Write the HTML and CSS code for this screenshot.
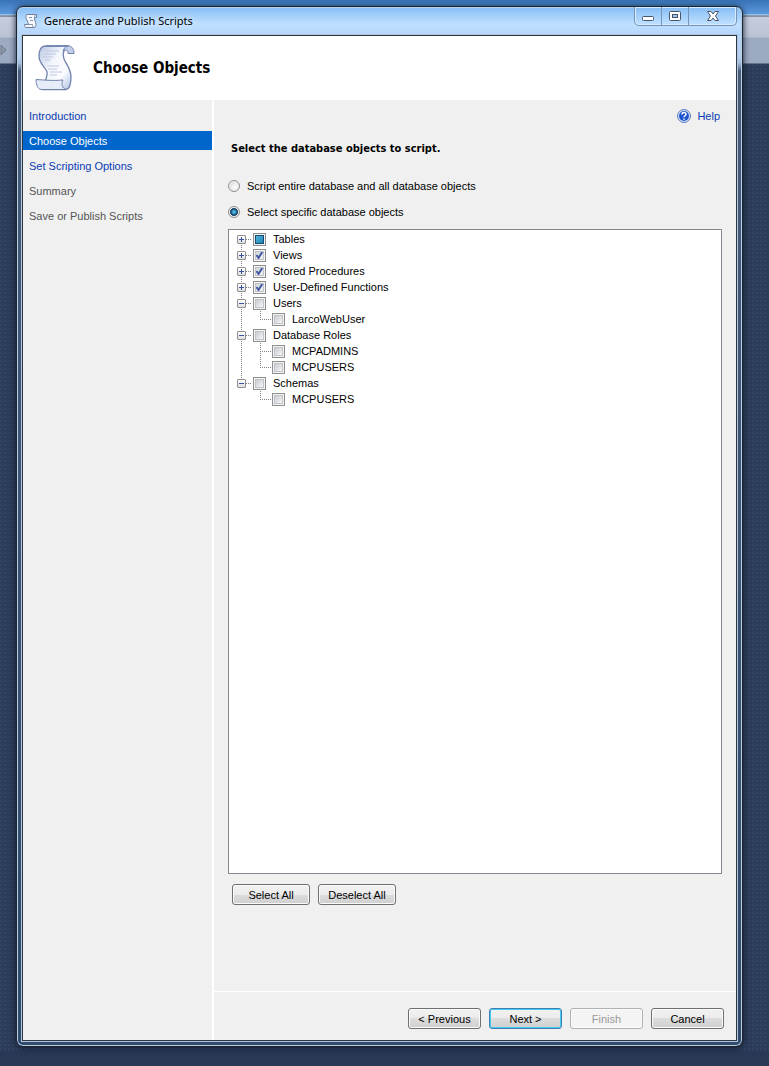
FILE: index.html
```html
<!DOCTYPE html>
<html lang="en">
<head>
<meta charset="utf-8">
<title>Generate and Publish Scripts</title>
<link rel="stylesheet" href="styles.css">
</head>
<body class="desktop">
<svg class="defs" aria-hidden="true">
  <defs>
    <linearGradient id="paper" x1="0" y1="0" x2="1" y2="1">
      <stop offset="0" stop-color="#b9c6e2"/><stop offset=".4" stop-color="#f3f6fc"/><stop offset=".7" stop-color="#fbfcff"/><stop offset="1" stop-color="#aebfe0"/>
    </linearGradient>
    <symbol id="scroll" viewBox="0 0 40 46">
      <path d="M11 1H33C28 5 27 9 29 14C31 19 36 24 36 32C36 39 35 44 31 44.500H8C10 35 13 31 12 27C10 21 4 19 4 11C4 5 6 1 11 1Z" fill="url(#paper)" stroke="#7182ad" stroke-width="1.300"/>
      <path d="M11 1H33C37 1 39 4 39 8.500H33C33 5 31 4 28 6C29 3 31 1 33 1Z" fill="#c3cfe8" stroke="#7182ad" stroke-linejoin="round"/>
      <path d="M1 34.500C10 35 18 36 28 35C26 39 27 43 31 44.500H6C3 44 1 40 1 34.500Z" fill="#e6ecf8" stroke="#7182ad" stroke-linejoin="round"/>
      <path d="M11 6H24M9 9H21M8 12H18M10 15H15M12 21H24M13 24H22M15 27H27M15 30H22" stroke="#bdc7de" fill="none"/>
    </symbol>
  </defs>
</svg>
<main class="window">
  <header class="titlebar">
    <svg class="title-icon" viewBox="0 0 14 14"><path d="M3 .5H12.500V3.500H10.500C10 6 12 8 12 10.500C12 12.500 11.500 13.500 10 13.500H2C1 13.500 .5 12 .5 10.500H4C5 8 2 6 2 3.500C2 2 2 .5 3 .5Z" fill="#f4f7fc" stroke="#73809a"/><path d="M4 10.500H8.500C8.500 12 9 13 10 13.500M10.500 3.500C10.500 2 11 1 12 .5M5 3.500H8M6 6.500H9" fill="none" stroke="#8995ad"/></svg>
    <span class="title">Generate and Publish Scripts</span>
    <div class="controls">
      <button class="control" aria-label="Minimize"><svg width="14" height="12"><rect x="1.500" y="6.500" width="11" height="4" rx="1" fill="#fff" stroke="#48546a"/></svg></button>
      <button class="control" aria-label="Maximize"><svg width="14" height="12"><rect x="1.500" y="1.500" width="11" height="9" rx="1" fill="#fff" stroke="#48546a"/><rect x="4.500" y="4.500" width="5" height="3" fill="#9fc4ec" stroke="#48546a"/></svg></button>
      <button class="control close" aria-label="Close"><svg width="14" height="12"><path d="M1.500 1.500H5L7 4L9 1.500H12.500L9.500 6L12.500 10.500H9L7 8L5 10.500H1.500L4.500 6Z" fill="#fff" stroke="#48546a"/></svg></button>
    </div>
  </header>
  <div class="client">
    <header class="banner">
      <svg class="banner-icon"><use href="#scroll"/></svg>
      <h1 class="banner-title">Choose Objects</h1>
    </header>
    <div class="body">
      <nav class="steps">
        <a class="step" href="#introduction">Introduction</a>
        <a class="step current" href="#choose" aria-current="step">Choose Objects</a>
        <a class="step" href="#options">Set Scripting Options</a>
        <span class="step pending">Summary</span>
        <span class="step pending">Save or Publish Scripts</span>
      </nav>
      <div class="page">
        <section class="content">
          <a class="help" href="#help">
            <svg width="14" height="14" viewBox="0 0 14 14"><circle cx="7" cy="7" r="6.500" fill="#dbe5f7" stroke="#5c7cb8"/><circle cx="7" cy="7" r="5" fill="#1d55cd"/><path d="M5 5.500C5 3 9 3 9 5.300C9 6.800 7 6.700 7 8.300M7 9.400V10.800" fill="none" stroke="#fff" stroke-width="1.500"/></svg>
            Help
          </a>
          <h2 class="prompt">Select the database objects to script.</h2>
          <div class="choices">
            <label class="choice"><input class="radio" type="radio" name="scope">Script entire database and all database objects</label>
            <label class="choice"><input class="radio" type="radio" name="scope" checked>Select specific database objects</label>
          </div>
          <ul class="tree">
            <li class="node"><div class="row"><button class="toggle plus" aria-label="Expand Tables"></button><label class="item"><input class="check mixed" type="checkbox">Tables</label></div></li>
            <li class="node"><div class="row"><button class="toggle plus" aria-label="Expand Views"></button><label class="item"><input class="check" type="checkbox" checked>Views</label></div></li>
            <li class="node"><div class="row"><button class="toggle plus" aria-label="Expand Stored Procedures"></button><label class="item"><input class="check" type="checkbox" checked>Stored Procedures</label></div></li>
            <li class="node"><div class="row"><button class="toggle plus" aria-label="Expand User-Defined Functions"></button><label class="item"><input class="check" type="checkbox" checked>User-Defined Functions</label></div></li>
            <li class="node"><div class="row"><button class="toggle" aria-label="Collapse Users"></button><label class="item"><input class="check" type="checkbox">Users</label></div>
              <ul class="children">
                <li class="leaf"><label class="item"><input class="check" type="checkbox">LarcoWebUser</label></li>
              </ul>
            </li>
            <li class="node"><div class="row"><button class="toggle" aria-label="Collapse Database Roles"></button><label class="item"><input class="check" type="checkbox">Database Roles</label></div>
              <ul class="children">
                <li class="leaf"><label class="item"><input class="check" type="checkbox">MCPADMINS</label></li>
                <li class="leaf"><label class="item"><input class="check" type="checkbox">MCPUSERS</label></li>
              </ul>
            </li>
            <li class="node"><div class="row"><button class="toggle" aria-label="Collapse Schemas"></button><label class="item"><input class="check" type="checkbox">Schemas</label></div>
              <ul class="children">
                <li class="leaf"><label class="item"><input class="check" type="checkbox">MCPUSERS</label></li>
              </ul>
            </li>
          </ul>
          <div class="selection">
            <button class="button wide">Select All</button>
            <button class="button wide">Deselect All</button>
          </div>
        </section>
        <footer class="footer">
          <button class="button">&lt; Previous</button>
          <button class="button default">Next &gt;</button>
          <button class="button" disabled>Finish</button>
          <button class="button">Cancel</button>
        </footer>
      </div>
    </div>
  </div>
</main>
</body>
</html>
```
FILE: styles.css
```css
* { box-sizing: border-box; }

.desktop {
  margin: 0;
  min-height: 100vh;
  padding: 6px 26px 19px 16px;
  display: flex;
  font: 11px/16px "Liberation Sans", Arial, sans-serif;
  color: #000;
  background:
    url("data:image/svg+xml,%3Csvg xmlns='http://www.w3.org/2000/svg' width='8' height='12'%3E%3Cpath d='M1 1L6 6L1 11Z' fill='%238b94a3' stroke='%23707a8a'/%3E%3C/svg%3E") 0 44px no-repeat,
    linear-gradient(#3872b6, #5b9ade 14px, #d5e8fa 15px, #3f5068 16px, #c5cddb 17px, #b9c3d3 37px, #9caac2 38px, #9caac2 63px, transparent 64px) 0 0 / 100% 64px no-repeat,
    linear-gradient(#293955, #293955) 0 100% / 100% 15px no-repeat,
    radial-gradient(circle at 1px 1px, #314462 1px, transparent 1px) 0 0 / 4px 4px,
    #2b3b59;
}

.defs { width: 0; height: 0; position: absolute; }

.window {
  flex: 1;
  display: flex;
  flex-direction: column;
  padding: 0 5px 5px;
  border: 1px solid #1b2534;
  border-radius: 7px;
  background: linear-gradient(#86bdf5, #bfe0ff 17px, #b5d6fb 28px, #b5cdee 50px, #a3bddf 56px, #4a5c7a 64px, #435878 300px, #304b6d);
  box-shadow: inset 0 0 0 1px #b9cfe3, 0 1px 6px #101a2a;
}

.titlebar { display: flex; height: 28px; padding-left: 2px; }
.title-icon { width: 14px; height: 14px; margin-top: 7px; }
.title {
  flex: 1;
  margin: 6px 0 0 6px;
  font-family: "Noto Sans", "Open Sans", sans-serif;
  text-shadow: 0 0 6px #fff;
}
.controls {
  display: flex;
  height: 19px;
  border: 1px solid #7794b5;
  border-top: 0;
  border-radius: 0 0 5px 5px;
  box-shadow: inset 0 0 0 1px #d5ebff;
}
.control {
  display: grid;
  place-items: center;
  width: 27px;
  padding: 0;
  border: 0;
  border-right: 1px solid #7794b5;
  background: none;
}
.close { width: 47px; border-right: 0; }

.client {
  flex: 1;
  display: flex;
  flex-direction: column;
  border: 1px solid #2c3748;
  background: #f0f0f0;
  box-shadow: 0 0 0 1px #b3c5d8;
}
.banner { display: flex; align-items: center; height: 64px; padding-left: 12px; gap: 18px; background: #fff; }
.banner-icon { width: 40px; height: 46px; }
.banner-title { margin: 0; font: bold 15px/22px "DejaVu Sans Condensed", "DejaVu Sans", sans-serif; }

.body { flex: 1; display: flex; }
.steps { width: 191px; padding-top: 6px; display: flex; flex-direction: column; gap: 6px; border-right: 2px solid #fff; }
.step { height: 19px; padding-left: 6px; line-height: 20px; color: #0a3cb4; text-decoration: none; }
.current { background: #0066cc; color: #fff; }
.pending { color: #555; }

.page { flex: 1; display: flex; flex-direction: column; }
.content { flex: 1; display: flex; flex-direction: column; padding: 8px 14px 86px; }
.help { align-self: flex-end; display: flex; align-items: center; gap: 6px; padding-right: 2px; color: #0a3cb4; text-decoration: none; }
.prompt { margin: 17px 0 0 3px; font: bold 11px/16px "DejaVu Sans Condensed", "DejaVu Sans", sans-serif; }
.choices { display: flex; flex-direction: column; gap: 10px; margin: 21px 0 9px; }
.choice { display: flex; align-items: center; gap: 7px; }

.radio {
  appearance: none;
  width: 12px;
  height: 12px;
  margin: 0;
  border: 1px solid #8e8f8f;
  border-radius: 50%;
  background: radial-gradient(circle at 60% 60%, #fff, #c9ccd0);
  box-shadow: inset 0 0 0 1px #f4f4f4;
}
.radio:checked { background: radial-gradient(circle, #52b8e4 1px, #164a70 3px, #173a59 4px, #d8dde2 4px); }

.tree { flex: 1; margin: 0; padding: 1px 0 0; list-style: none; border: 1px solid #828790; background: #fff; }
.node { background: linear-gradient(#808080 50%, transparent 50%) 12px 0 / 1px 2px repeat-y; }
.node:first-child {
  background:
    linear-gradient(#fff, #fff) 0 0 / 20px 8px no-repeat,
    linear-gradient(#808080 50%, transparent 50%) 12px 0 / 1px 2px repeat-y;
}
.node:last-child {
  background: repeating-linear-gradient(#808080 0 1px, transparent 1px 2px) 12px 0 / 1px 8px no-repeat;
}
.row { display: flex; align-items: center; height: 16px; padding-left: 8px; }
.row::before { content: ""; order: 1; width: 6px; height: 1px; margin-right: 1px; background: linear-gradient(90deg, #808080 50%, transparent 50%) 0 0 / 2px 1px; }
.row .item { order: 2; }
.toggle {
  width: 9px;
  height: 9px;
  padding: 0;
  border: 1px solid #919191;
  border-radius: 1px;
  background: linear-gradient(#3b55a0, #3b55a0) center / 5px 1px no-repeat, linear-gradient(#fff, #dedede);
}
.plus { background: linear-gradient(#3b55a0, #3b55a0) center / 5px 1px no-repeat, linear-gradient(#3b55a0, #3b55a0) center / 1px 5px no-repeat, linear-gradient(#fff, #dedede); }
.item { display: flex; align-items: center; gap: 7px; }
.children { margin: 0; padding: 0 0 0 31px; list-style: none; }
.leaf {
  height: 16px;
  padding-left: 12px;
  background:
    repeating-linear-gradient(90deg, #808080 0 1px, transparent 1px 2px) 0 8px / 12px 1px no-repeat,
    repeating-linear-gradient(#808080 0 1px, transparent 1px 2px) 0 0 / 1px 8px no-repeat;
}
.leaf:not(:last-child) {
  background:
    repeating-linear-gradient(90deg, #808080 0 1px, transparent 1px 2px) 0 8px / 12px 1px no-repeat,
    repeating-linear-gradient(#808080 0 1px, transparent 1px 2px) 0 0 / 1px 16px no-repeat;
}
.check {
  appearance: none;
  width: 13px;
  height: 13px;
  margin: 0;
  border: 1px solid #8e8f8f;
  background: linear-gradient(135deg, #c8ccd2, #f5f5f5) center / 7px 7px no-repeat, #f4f4f4;
  box-shadow: inset 0 0 0 1px #f4f4f4, inset 0 0 0 2px #bfc3c9;
}
.check:checked {
  background: url("data:image/svg+xml,%3Csvg xmlns='http://www.w3.org/2000/svg' viewBox='0 0 11 11'%3E%3Cpath d='M2.500 5L4.500 8L8.500 1.500' fill='none' stroke='%23405aa0' stroke-width='2'/%3E%3C/svg%3E") center / 11px 11px no-repeat, linear-gradient(135deg, #cfd4dc, #f5f5f5);
}
.mixed { background: linear-gradient(135deg, #5ac0e4, #1479ac) center / 9px 9px no-repeat, #f4f4f4; box-shadow: inset 0 0 0 1px #f4f4f4, inset 0 0 0 2px #174b70; }

.selection { display: flex; gap: 8px; margin: 10px 0 0 4px; }
.button {
  width: 73px;
  height: 21px;
  padding: 0;
  border: 1px solid #707070;
  border-radius: 3px;
  font: inherit;
  color: #000;
  background: linear-gradient(#f2f2f2, #ebebeb 50%, #dddddd 50%, #cfcfcf);
  box-shadow: inset 0 0 0 1px #fafafa;
}
.wide { width: 78px; }
.default { border-color: #3c7fb1; box-shadow: inset 0 0 0 1px #46c8f5; }
.button:disabled { border-color: #adb2b5; color: #9a9a9a; background: #f4f4f4; }
.footer { display: flex; justify-content: flex-end; gap: 8px; padding: 16px 12px 11px; border-top: 1px solid #fff; }
```
